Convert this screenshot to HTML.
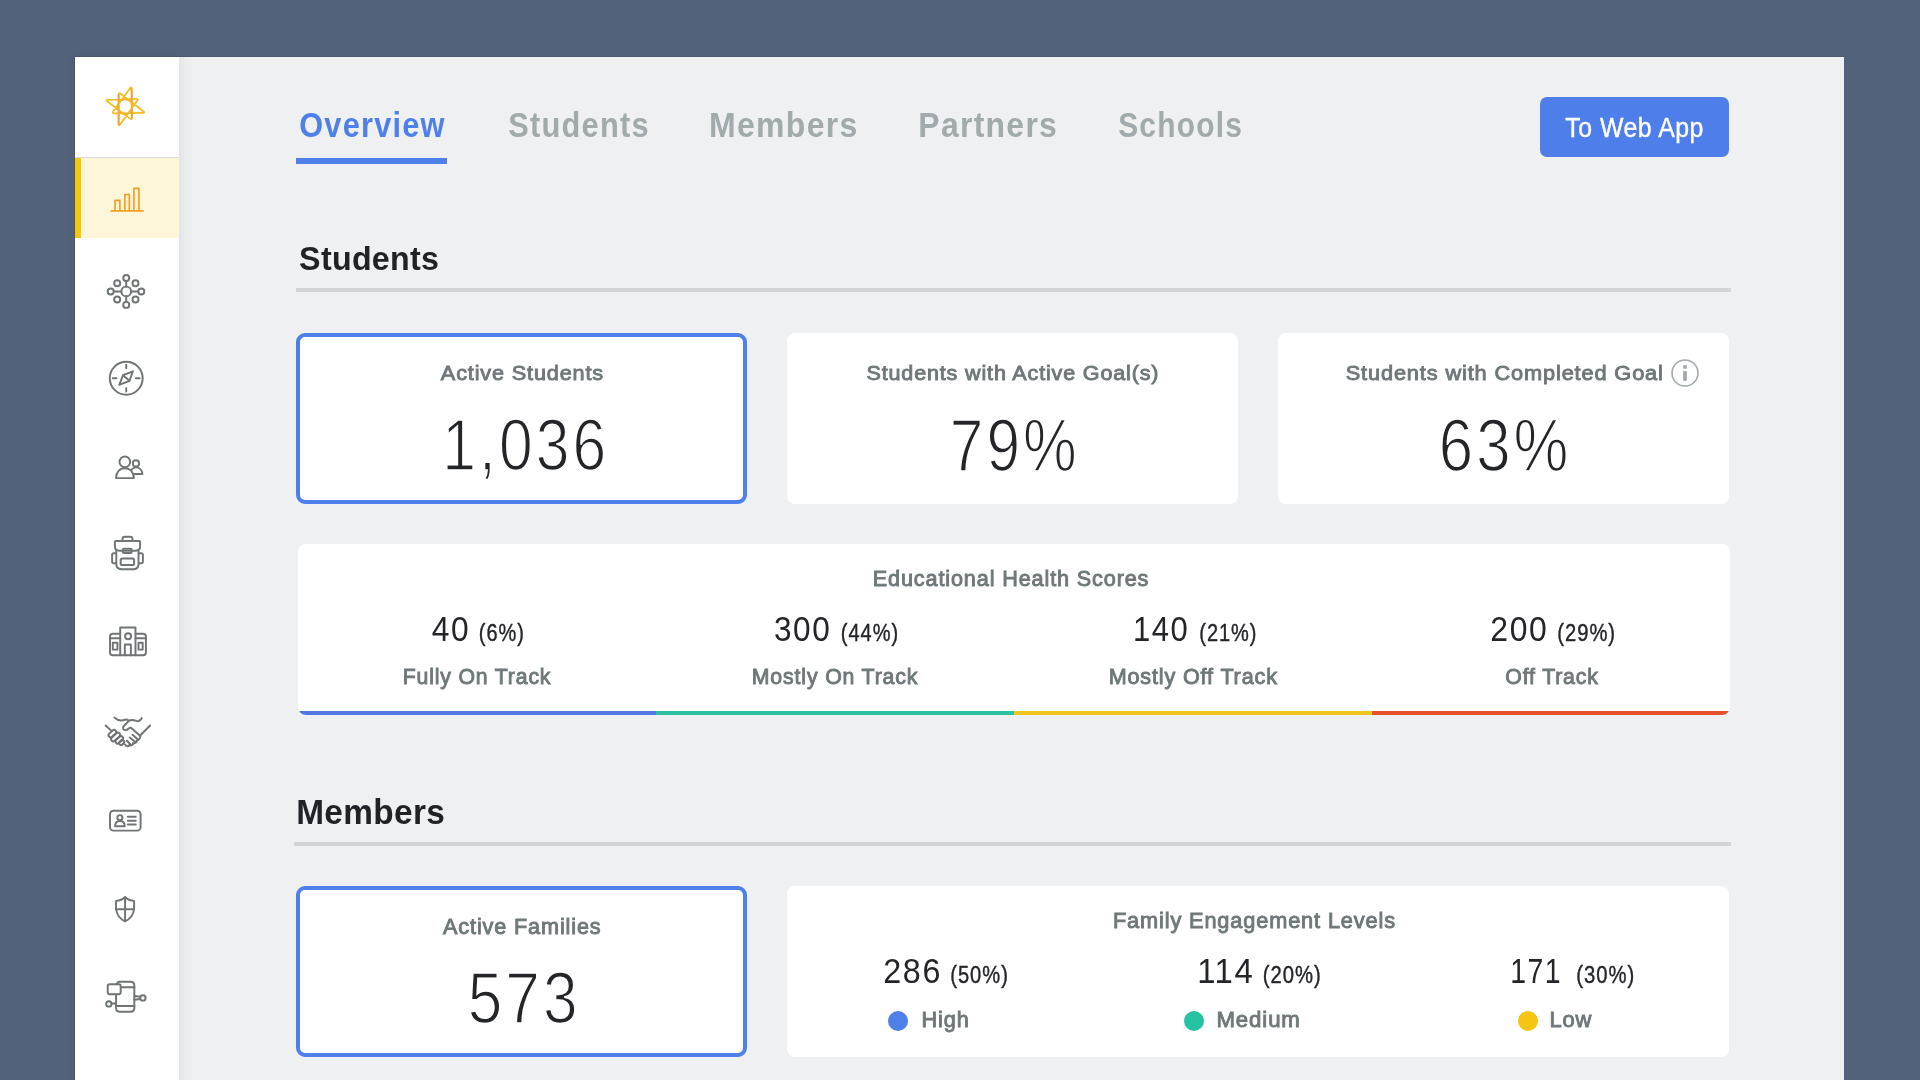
<!DOCTYPE html>
<html><head><meta charset="utf-8"><title>Overview</title>
<style>
*{margin:0;padding:0;box-sizing:border-box}
html,body{width:1920px;height:1080px;overflow:hidden;background:#52627a;font-family:"Liberation Sans",sans-serif}
.abs{position:absolute}
#panel{left:75px;top:57px;width:1769px;height:1030px;background:#eff0f2;box-shadow:0 -1px 0 #4c586c,-1px 0 0 #4c586c}
#side{left:75px;top:57px;width:104px;height:1030px;background:#fff;box-shadow:2px 0 12px rgba(40,50,70,0.09)}
#logoline{left:75px;top:156.5px;width:104px;height:1.5px;background:#d6d7d6}
#active{left:75px;top:158px;width:104px;height:80px;background:#fdf6d9}
#activebar{left:75px;top:158px;width:6px;height:80px;background:#f5c70a}
#uline{left:296px;top:157.5px;width:151px;height:6px;background:#4f7fe9}
#btn{left:1540px;top:97px;width:189px;height:60px;background:#4d7ee9;border-radius:7px}
.div{height:4px;background:#d2d5d8}
.card{background:#fff;border-radius:8px}
.sel{border:4px solid #4f7fe9;border-radius:9px}
#hbar{left:298px;top:711px;width:1432px;height:4px;display:flex}
#hbar i{flex:1;display:block}
.dot{width:20px;height:20px;border-radius:50%}
</style></head>
<body>
<div id="panel" class="abs"></div>
<div id="side" class="abs"></div>
<div id="logoline" class="abs"></div>
<div id="active" class="abs"></div>
<div id="activebar" class="abs"></div>
<svg style="position:absolute;left:96px;top:76px" width="60" height="60" viewBox="96 76 60 60" fill="none" stroke-width="1.8" stroke-linejoin="round" stroke-linecap="round">
<path d="M130.05 88.32L113.31 111.29Q111.78 113.39 114.38 113.34L142.78 112.81Q145.38 112.77 143.32 111.18L120.69 93.76Q118.63 92.18 118.63 94.78L118.63 124.01Q118.63 126.61 120.14 124.50L137.07 100.88Q138.59 98.76 135.99 98.86L107.95 99.92Q105.35 100.02 107.43 101.59L129.93 118.62Q132.00 120.18 131.97 117.59L131.62 88.82Q131.58 86.22 130.05 88.32Z" stroke="#f2bd24"/>
<path d="M131.62 88.82L131.97 117.59M118.63 124.01L118.63 94.78" stroke="#f0a23a"/>
<circle cx="125" cy="106.6" r="7.4" stroke="#f2b62a"/>
</svg>
<svg style="position:absolute;left:106px;top:180px" width="40" height="40" viewBox="0 0 1080 1080" fill="none" stroke="#f29d1e" stroke-width="44" stroke-linejoin="round">
<path d="M145 835H1000" stroke-width="50" stroke-linecap="round"/>
<path d="M245 835V550H375V835M510 835V390H630V835M755 835V225H890V835"/>
</svg>
<svg style="position:absolute;left:101px;top:266px" width="50" height="50" viewBox="0 0 1080 1080" fill="none" stroke="#6f7475" stroke-width="42" stroke-linecap="round" stroke-linejoin="round"><circle cx="545" cy="550" r="105"/>
<circle cx="545" cy="258" r="65"/><circle cx="545" cy="840" r="65"/>
<circle cx="210" cy="550" r="65"/><circle cx="870" cy="550" r="65"/>
<circle cx="350" cy="372" r="65"/><circle cx="745" cy="372" r="65"/>
<circle cx="350" cy="725" r="65"/><circle cx="745" cy="725" r="65"/>
<path d="M545 323V445M545 655V775M275 550H440M650 550H805"/></svg><svg style="position:absolute;left:101px;top:353px" width="50" height="50" viewBox="0 0 1080 1080" fill="none" stroke="#6f7475" stroke-width="42" stroke-linecap="round" stroke-linejoin="round"><circle cx="545" cy="545" r="355"/>
<path d="M545 255V330M545 760V830M255 545H335M755 545H835"/>
<path d="M690 395L475 480L395 690L615 600Z"/><path d="M480 485L615 600"/></svg><svg style="position:absolute;left:101px;top:442px" width="50" height="50" viewBox="0 0 1080 1080" fill="none" stroke="#6f7475" stroke-width="42" stroke-linecap="round" stroke-linejoin="round"><circle cx="515" cy="430" r="115"/>
<path d="M325 780C325 650 405 565 515 565C625 565 710 650 710 780Z"/>
<circle cx="755" cy="462" r="68"/>
<path d="M660 595C690 560 720 548 755 548C830 548 885 610 895 690H715"/></svg><svg style="position:absolute;left:101px;top:528px" width="50" height="50" viewBox="0 0 1080 1080" fill="none" stroke="#6f7475" stroke-width="42" stroke-linecap="round" stroke-linejoin="round"><path d="M465 280V240Q465 190 515 190H630Q680 190 680 240V280"/>
<path d="M300 400V300Q300 282 318 282H828Q845 282 845 300V400Q845 490 745 490H400Q300 490 300 400Z"/>
<rect x="470" y="447" width="195" height="95" rx="30"/>
<path d="M330 470V780Q330 890 440 890H710Q810 890 810 780V470"/>
<rect x="425" y="660" width="290" height="140" rx="35"/>
<path d="M322 545H275Q240 545 240 580V725Q240 760 275 760H322"/>
<path d="M818 545H870Q905 545 905 580V725Q905 760 870 760H818"/></svg><svg style="position:absolute;left:101px;top:617px" width="50" height="50" viewBox="0 0 1080 1080" fill="none" stroke="#6f7475" stroke-width="42" stroke-linecap="round" stroke-linejoin="round"><rect x="415" y="225" width="330" height="600"/>
<circle cx="585" cy="415" r="65"/>
<path d="M515 825V595H645V825"/>
<path d="M415 825H255Q195 825 195 765V420Q195 360 255 360H415"/>
<path d="M745 825H910Q970 825 970 765V420Q970 360 910 360H745"/>
<path d="M195 460H415M745 460H970"/>
<rect x="255" y="555" width="100" height="150"/><rect x="810" y="555" width="90" height="150"/></svg><svg style="position:absolute;left:101px;top:707px" width="50" height="50" viewBox="0 0 1080 1080" fill="none" stroke="#6f7475" stroke-width="42" stroke-linecap="round" stroke-linejoin="round"><path d="M290 230C350 290 440 300 520 275C570 262 590 285 600 300C650 270 700 275 760 300C820 320 870 270 880 240"/>
<path d="M100 400L215 505"/><path d="M1060 400L850 610"/>
<path d="M600 300L495 410C455 450 480 500 530 500C575 495 610 450 640 445L850 625"/>
<path d="M850 625C850 690 800 730 770 720C790 760 720 800 690 780C700 820 640 850 610 820C600 860 540 850 520 810"/>
<path d="M680 600L800 700M620 660L750 760M560 730L640 810"/>
<rect x="150" y="530" width="190" height="90" rx="45" transform="rotate(-42 245 575)"/>
<rect x="200" y="600" width="230" height="95" rx="47" transform="rotate(-42 315 647)"/>
<rect x="300" y="665" width="190" height="90" rx="45" transform="rotate(-42 395 710)"/>
<rect x="385" y="725" width="120" height="85" rx="42" transform="rotate(-42 445 767)"/></svg><svg style="position:absolute;left:101px;top:795px" width="50" height="50" viewBox="0 0 1080 1080" fill="none" stroke="#6f7475" stroke-width="42" stroke-linecap="round" stroke-linejoin="round"><rect x="195" y="340" width="660" height="430" rx="75"/>
<circle cx="408" cy="490" r="55"/>
<path d="M305 675C305 600 350 560 408 560C465 560 512 600 512 675Z"/>
<path d="M578 470H750M578 555H750M578 638H750"/></svg><svg style="position:absolute;left:101px;top:884px" width="50" height="50" viewBox="0 0 1080 1080" fill="none" stroke="#6f7475" stroke-width="42" stroke-linecap="round" stroke-linejoin="round"><path d="M520 280C460 340 390 360 325 365V540C340 660 420 760 520 805C620 760 700 660 715 540V365C650 360 580 340 520 280Z"/>
<path d="M520 290V800M325 545H715"/></svg><svg style="position:absolute;left:101px;top:972px" width="50" height="50" viewBox="0 0 1080 1080" fill="none" stroke="#6f7475" stroke-width="42" stroke-linecap="round" stroke-linejoin="round"><path d="M340 265Q350 210 410 210H640Q720 210 720 290V780Q720 860 640 860H405Q325 860 325 780V480"/>
<path d="M425 330H720M325 735H720"/>
<rect x="145" y="265" width="280" height="215" rx="40"/>
<circle cx="170" cy="690" r="58"/><path d="M228 680H325"/>
<circle cx="905" cy="560" r="58"/><path d="M720 520L850 535M720 600L850 585"/></svg>
<div id="uline" class="abs"></div>
<div id="btn" class="abs"></div>
<div class="abs div" style="left:296px;top:288px;width:1435px"></div>
<div class="abs div" style="left:294px;top:842px;width:1437px"></div>
<div class="abs card sel" style="left:296px;top:333px;width:451px;height:171px"></div>
<div class="abs card" style="left:787px;top:333px;width:451px;height:171px"></div>
<div class="abs card" style="left:1278px;top:333px;width:451px;height:171px"></div>
<div class="abs card" style="left:298px;top:544px;width:1432px;height:171px;overflow:hidden">
  <div style="position:absolute;left:0;bottom:0;width:100%;height:4px;display:flex"><i style="flex:1;background:#5078e0"></i><i style="flex:1;background:#2ec0a3"></i><i style="flex:1;background:#ecc520"></i><i style="flex:1;background:#e8502b"></i></div>
</div>
<div class="abs card sel" style="left:296px;top:886px;width:451px;height:171px"></div>
<div class="abs card" style="left:787px;top:886px;width:942px;height:171px"></div>
<div class="abs dot" style="left:888px;top:1010.5px;background:#4f7fe9"></div>
<div class="abs dot" style="left:1184px;top:1010.5px;background:#26c3a3"></div>
<div class="abs dot" style="left:1518px;top:1010.5px;background:#f5c512"></div>
<svg style="position:absolute;left:1665px;top:353px" width="40" height="40" viewBox="0 0 40 40">
<circle cx="20" cy="20" r="13" fill="none" stroke="#a3aaad" stroke-width="1.6"/>
<rect x="18.1" y="12.2" width="3.8" height="3.5" fill="#a3aaad"/>
<rect x="18.1" y="18.1" width="3.8" height="9.7" fill="#a3aaad"/>
</svg>
<svg class="abs" style="left:0;top:0;will-change:transform" width="1920" height="1080" viewBox="0 0 1920 1080" font-family="Liberation Sans">
<text transform="translate(299.24,137.30) scale(0.8677,1)" font-size="35.41" font-weight="bold" letter-spacing="1.42" fill="#4f7fe9">Overview</text>
<text transform="translate(508.22,137.30) scale(0.8700,1)" font-size="35.41" font-weight="bold" letter-spacing="1.42" fill="#a1abad">Students</text>
<text transform="translate(709.00,137.30) scale(0.9043,1)" font-size="35.41" font-weight="bold" letter-spacing="1.42" fill="#a1abad">Members</text>
<text transform="translate(918.30,137.30) scale(0.9022,1)" font-size="35.41" font-weight="bold" letter-spacing="1.42" fill="#a1abad">Partners</text>
<text transform="translate(1118.13,137.30) scale(0.8471,1)" font-size="35.41" font-weight="bold" letter-spacing="1.42" fill="#a1abad">Schools</text>
<text transform="translate(1565.30,137.40) scale(0.9205,1)" font-size="27.02" font-weight="normal" letter-spacing="0.54" fill="#ffffff" stroke="#ffffff" stroke-width="0.4">To Web App</text>
<text transform="translate(299.10,270.00) scale(0.9434,1)" font-size="34.13" font-weight="bold" letter-spacing="0.34" fill="#1f2226">Students</text>
<text transform="translate(296.21,824.00) scale(0.9585,1)" font-size="34.84" font-weight="bold" letter-spacing="0.35" fill="#1f2226">Members</text>
<text transform="translate(440.87,380.25) scale(1.0413,1)" font-size="20.76" font-weight="normal" letter-spacing="0.83" fill="#6f7879" stroke="#6f7879" stroke-width="0.9">Active Students</text>
<text transform="translate(866.49,380.25) scale(1.0357,1)" font-size="20.76" font-weight="normal" letter-spacing="0.83" fill="#6f7879" stroke="#6f7879" stroke-width="0.9">Students with Active Goal(s)</text>
<text transform="translate(1345.69,380.25) scale(1.0484,1)" font-size="20.76" font-weight="normal" letter-spacing="0.83" fill="#6f7879" stroke="#6f7879" stroke-width="0.9">Students with Completed Goal</text>
<text transform="translate(872.76,585.75) scale(1.0075,1)" font-size="21.48" font-weight="normal" letter-spacing="0.86" fill="#6f7879" stroke="#6f7879" stroke-width="0.9">Educational Health Scores</text>
<text transform="translate(402.79,684.25) scale(0.9877,1)" font-size="21.48" font-weight="normal" letter-spacing="0.86" fill="#6f7879" stroke="#6f7879" stroke-width="0.9">Fully On Track</text>
<text transform="translate(751.78,684.25) scale(0.9910,1)" font-size="21.48" font-weight="normal" letter-spacing="0.86" fill="#6f7879" stroke="#6f7879" stroke-width="0.9">Mostly On Track</text>
<text transform="translate(1108.67,684.25) scale(1.0038,1)" font-size="21.48" font-weight="normal" letter-spacing="0.86" fill="#6f7879" stroke="#6f7879" stroke-width="0.9">Mostly Off Track</text>
<text transform="translate(1505.25,684.25) scale(0.9903,1)" font-size="21.48" font-weight="normal" letter-spacing="0.86" fill="#6f7879" stroke="#6f7879" stroke-width="0.9">Off Track</text>
<text transform="translate(443.06,933.85) scale(1.0208,1)" font-size="21.19" font-weight="normal" letter-spacing="0.85" fill="#6f7879" stroke="#6f7879" stroke-width="0.9">Active Families</text>
<text transform="translate(1112.95,927.75) scale(1.0062,1)" font-size="21.62" font-weight="normal" letter-spacing="0.86" fill="#6f7879" stroke="#6f7879" stroke-width="0.9">Family Engagement Levels</text>
<text transform="translate(921.56,1026.55) scale(1.0098,1)" font-size="21.48" font-weight="normal" letter-spacing="0.86" fill="#6f7879" stroke="#6f7879" stroke-width="0.9">High</text>
<text transform="translate(1216.43,1026.55) scale(1.0344,1)" font-size="21.48" font-weight="normal" letter-spacing="0.86" fill="#6f7879" stroke="#6f7879" stroke-width="0.9">Medium</text>
<text transform="translate(1549.45,1026.55) scale(1.0197,1)" font-size="21.48" font-weight="normal" letter-spacing="0.86" fill="#6f7879" stroke="#6f7879" stroke-width="0.9">Low</text>
<text transform="translate(442.35,470.40) scale(0.8290,1)" font-size="73.10" font-weight="normal" letter-spacing="3.66" fill="#232528" stroke="#ffffff" stroke-width="1.6">1,036</text>
<text transform="translate(949.82,470.80) scale(0.8145,1)" font-size="74.10" font-weight="normal" letter-spacing="3.70" fill="#232528" stroke="#ffffff" stroke-width="1.6">79%</text>
<text transform="translate(1438.74,471.00) scale(0.8301,1)" font-size="74.38" font-weight="normal" letter-spacing="3.72" fill="#232528" stroke="#ffffff" stroke-width="1.6">63%</text>
<text transform="translate(467.66,1023.20) scale(0.8682,1)" font-size="71.68" font-weight="normal" letter-spacing="3.58" fill="#232528" stroke="#ffffff" stroke-width="1.6">573</text>
<text transform="translate(431.70,640.60) scale(0.8998,1)" font-size="35.27" font-weight="normal" letter-spacing="1.76" fill="#232528">40</text>
<text transform="translate(478.74,640.50) scale(0.8608,1)" font-size="23.18" font-weight="normal" letter-spacing="1.16" fill="#232528" stroke="#232528" stroke-width="0.4">(6%)</text>
<text transform="translate(773.91,640.60) scale(0.8958,1)" font-size="35.27" font-weight="normal" letter-spacing="1.76" fill="#232528">300</text>
<text transform="translate(840.84,640.50) scale(0.8624,1)" font-size="23.18" font-weight="normal" letter-spacing="1.16" fill="#232528" stroke="#232528" stroke-width="0.4">(44%)</text>
<text transform="translate(1132.96,640.60) scale(0.8787,1)" font-size="35.27" font-weight="normal" letter-spacing="1.76" fill="#232528">140</text>
<text transform="translate(1199.24,640.50) scale(0.8624,1)" font-size="23.18" font-weight="normal" letter-spacing="1.16" fill="#232528" stroke="#232528" stroke-width="0.4">(21%)</text>
<text transform="translate(1490.30,640.60) scale(0.9057,1)" font-size="35.27" font-weight="normal" letter-spacing="1.76" fill="#232528">200</text>
<text transform="translate(1557.23,640.50) scale(0.8701,1)" font-size="23.18" font-weight="normal" letter-spacing="1.16" fill="#232528" stroke="#232528" stroke-width="0.4">(29%)</text>
<text transform="translate(883.29,983.00) scale(0.9068,1)" font-size="35.56" font-weight="normal" letter-spacing="1.78" fill="#232528">286</text>
<text transform="translate(950.23,982.60) scale(0.8670,1)" font-size="23.18" font-weight="normal" letter-spacing="1.16" fill="#232528" stroke="#232528" stroke-width="0.4">(50%)</text>
<text transform="translate(1197.15,983.00) scale(0.9242,1)" font-size="35.56" font-weight="normal" letter-spacing="1.78" fill="#232528">114</text>
<text transform="translate(1262.72,982.60) scale(0.8748,1)" font-size="23.18" font-weight="normal" letter-spacing="1.16" fill="#232528" stroke="#232528" stroke-width="0.4">(20%)</text>
<text transform="translate(1510.22,983.00) scale(0.7988,1)" font-size="35.56" font-weight="normal" letter-spacing="1.78" fill="#232528">171</text>
<text transform="translate(1576.13,982.60) scale(0.8732,1)" font-size="23.18" font-weight="normal" letter-spacing="1.16" fill="#232528" stroke="#232528" stroke-width="0.4">(30%)</text>
</svg>
</body></html>
